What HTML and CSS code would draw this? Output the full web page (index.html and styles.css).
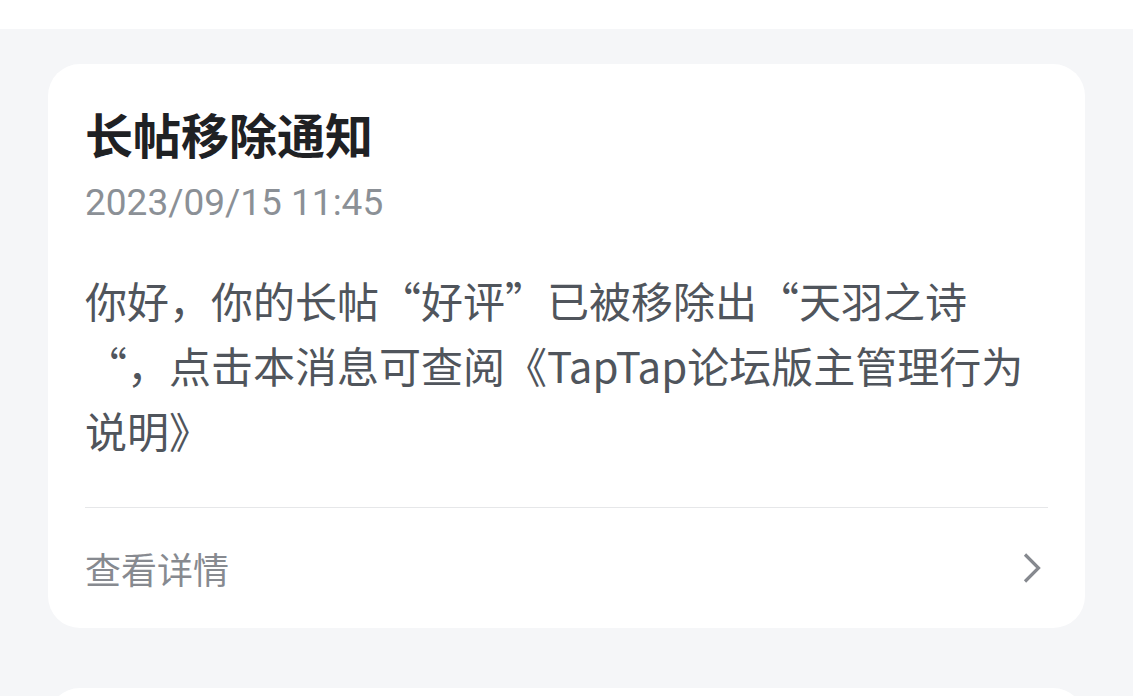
FILE: index.html
```html
<!DOCTYPE html>
<html lang="zh-CN">

<head>
    <meta charset="UTF-8">
    <meta name="viewport" content="width=device-width, initial-scale=1.0">
    <title>消息通知</title>
    <link rel="stylesheet" href="styles.css">
</head>

<body>
    <div class="top-bar"></div>
    <div class="list">
        <div class="card">
            <h1 class="card-title">长帖移除通知</h1>
            <div class="card-time">2023/09/15 11:45</div>
            <p class="card-text">你好，你的长帖“好评”已被移除出“天羽之诗“，点击本消息可查阅《TapTap论坛版主管理行为说明》</p>
            <div class="card-footer">
                <span>查看详情</span>
                <svg class="arrow" width="20" height="30" viewBox="0 0 20 30">
                    <path d="M3 1.5 L16.5 15 L3 28.5" fill="none" stroke="#86898f" stroke-width="3.2" />
                </svg>
            </div>
        </div>
        <div class="card card-next"></div>
    </div>
</body>

</html>
```

FILE: styles.css
```css
html,
body {
    height: 100%;
}

body {
    margin: 0;
    background-color: #f5f6f8;
    font-family: "Noto Sans CJK SC", "Noto Sans", sans-serif;
    overflow: hidden;
}

.top-bar {
    height: 29px;
    background-color: #fff;
}

.list {
    padding: 35px 48px 0;
}

.card {
    background-color: #fff;
    border-radius: 32px;
    padding: 37px 37px 0;
    margin-bottom: 60px;
}

.card-title {
    margin: 0;
    font-size: 48px;
    line-height: 64px;
    font-weight: 700;
    color: #1f2124;
}

.card-time {
    margin-top: 14px;
    font-family: Roboto, "Noto Sans", sans-serif;
    font-size: 37px;
    line-height: 48px;
    color: #8b9096;
}

.card-text {
    margin: 40px 0 45px;
    font-size: 42px;
    line-height: 65px;
    color: #50555c;
}

.card-footer {
    display: flex;
    align-items: center;
    justify-content: space-between;
    height: 120px;
    border-top: 1px solid #e6e7e9;
    font-size: 36px;
    color: #878a90;
}

.arrow {
    margin-right: 6px;
}

.card-next {
    height: 100px;
}
```
